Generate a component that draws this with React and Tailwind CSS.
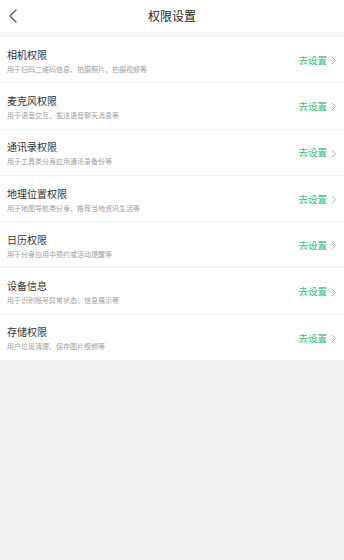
import React from "react";

export default function App() {
  const items = [
    { title: "相机权限", desc: "用于扫码二维码信息、拍摄照片、拍摄视频等" },
    { title: "麦克风权限", desc: "用于语音交互、发送语音聊天消息等" },
    { title: "通讯录权限", desc: "用于工具类分身应用通讯录备份等" },
    { title: "地理位置权限", desc: "用于地图导航类分身、推荐当地资讯生活等" },
    { title: "日历权限", desc: "用于分身应用中预约或活动提醒等" },
    { title: "设备信息", desc: "用于识别账号异常状态、信息展示等" },
    { title: "存储权限", desc: "用户垃圾清理、保存图片视频等" },
  ];

  return (
    <div
      className="w-[344px] h-[560px] bg-[#f2f2f2] overflow-hidden"
      style={{ fontFamily: '"Noto Sans CJK SC", "Noto Sans", sans-serif' }}
    >
      {/* Header */}
      <div className="relative h-[32px] bg-white flex items-center justify-center">
        <svg className="absolute left-[8px] top-[9px] w-[10px] h-[14px]" viewBox="0 0 10 14" fill="none">
          <path d="M8 1L2 7l6 6" stroke="#555" strokeWidth="1.2" strokeLinecap="round" strokeLinejoin="round" />
        </svg>
        <span className="text-[12px] text-[#222] leading-none">权限设置</span>
      </div>

      {/* List */}
      <div className="mt-[5px] bg-white">
        {items.map((item, i) => (
          <div
            key={i}
            className="h-[46.3px] box-border border-b border-[#f3f3f3] flex items-center justify-between pl-[7px] pr-[7px]"
          >
            <div className="flex flex-col pt-[3px]">
              <span className="text-[10px] leading-[12px] text-[#333]">{item.title}</span>
              <span className="text-[7px] leading-[9px] text-[#a0a0a0] mt-[4px]">{item.desc}</span>
            </div>
            <div className="flex items-center gap-[4px] mt-[2px]">
              <span className="text-[9.5px] text-[#2dc27a] leading-none">去设置</span>
              <svg className="w-[6px] h-[9px]" viewBox="0 0 6 9" fill="none">
                <path d="M1 1l3.5 3.5L1 8" stroke="#aaa" strokeWidth="0.9" strokeLinecap="round" strokeLinejoin="round" />
              </svg>
            </div>
          </div>
        ))}
      </div>
    </div>
  );
}
